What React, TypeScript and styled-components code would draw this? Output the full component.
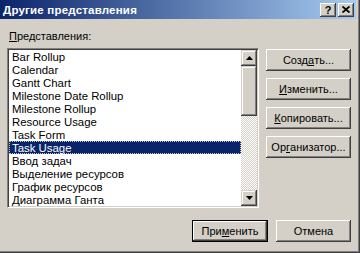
import React from 'react';
import styled, { createGlobalStyle } from 'styled-components';

const GlobalStyle = createGlobalStyle`
  html, body {
    margin: 0;
    padding: 0;
    background: #d4d0c8;
  }
  body {
    font-family: 'Liberation Sans', Arial, sans-serif;
    font-size: 11px;
  }
`;

const Window = styled.div`
  width: 360px;
  height: 253px;
  box-sizing: border-box;
  padding: 0 3px 3px 0;
  display: flex;
  flex-direction: column;
  background: #d4d0c8;
  box-shadow: inset -1px -1px #404040, inset -2px -2px #808080;
  overflow: hidden;
`;

const TitleBar = styled.div`
  height: 19px;
  margin-right: 1px;
  display: flex;
  align-items: center;
  padding: 0 2px 0 3px;
  background: linear-gradient(to right, #0a246a, #a6caf0);
  flex-shrink: 0;
`;

const TitleText = styled.div`
  flex: 1;
  color: #fff;
  font-weight: 700;
  font-size: 11.5px;
  letter-spacing: 0.2px;
  white-space: nowrap;
`;

const CaptionButton = styled.div<{ $gap?: number }>`
  width: 16px;
  height: 14px;
  box-sizing: border-box;
  margin-left: ${(p) => p.$gap ?? 0}px;
  display: flex;
  align-items: center;
  justify-content: center;
  background: #d4d0c8;
  box-shadow: inset -1px -1px #404040, inset 1px 1px #fff, inset -2px -2px #808080;
  font-weight: 700;
  font-size: 11px;
  color: #000;
  line-height: 14px;
`;

const Body = styled.div`
  flex: 1;
  display: flex;
  flex-direction: column;
  padding: 11px 6px 0 7px;
`;

const Label = styled.div`
  height: 13px;
  line-height: 13px;
  padding-left: 2px;
  margin-bottom: 5px;
  color: #000;
`;

const Key = styled.span`
  text-decoration: underline;
  text-underline-offset: 1px;
`;

const TopRow = styled.div`
  display: flex;
  align-items: flex-start;
  gap: 7px;
`;

const ListBox = styled.div`
  width: 252px;
  height: 160px;
  box-sizing: border-box;
  padding: 1px;
  display: flex;
  background: #fff;
  border: 1px solid;
  border-color: #808080 #fff #fff #808080;
  box-shadow: inset 1px 1px #404040, inset -1px -1px #d4d0c8;
`;

const Rows = styled.div`
  flex: 1;
  display: flex;
  flex-direction: column;
`;

const Row = styled.div<{ $selected?: boolean }>`
  height: 13px;
  line-height: 12px;
  box-sizing: border-box;
  padding-left: 2px;
  font-size: 11.4px;
  white-space: nowrap;
  color: ${(p) => (p.$selected ? '#fff' : '#000')};
  background: ${(p) => (p.$selected ? '#0a246a' : 'transparent')};
  border: 1px dotted ${(p) => (p.$selected ? '#c8c8a0' : 'transparent')};
`;

const ScrollBar = styled.div`
  width: 16px;
  display: flex;
  flex-direction: column;
  background-color: #d4d0c8;
  background-image: repeating-conic-gradient(#fff 0 25%, #d4d0c8 0 50%);
  background-size: 2px 2px;
`;

const ScrollPart = styled.div<{ $h: number }>`
  height: ${(p) => p.$h}px;
  flex-shrink: 0;
  box-sizing: border-box;
  display: flex;
  align-items: center;
  justify-content: center;
  background: #d4d0c8;
  box-shadow: inset -1px -1px #404040, inset 1px 1px #d4d0c8, inset -2px -2px #808080, inset 2px 2px #fff;
`;

const Track = styled.div`
  flex: 1;
`;

const ButtonColumn = styled.div`
  display: flex;
  flex-direction: column;
  gap: 7px;
  margin-top: 1px;
`;

const Button = styled.div<{ $w: number; $default?: boolean }>`
  width: ${(p) => p.$w}px;
  height: 22px;
  box-sizing: border-box;
  display: flex;
  align-items: center;
  justify-content: center;
  background: #d4d0c8;
  color: #000;
  white-space: nowrap;
  border: ${(p) => (p.$default ? '1px solid #000' : 'none')};
  box-shadow: inset -1px -1px #404040, inset 1px 1px #fff, inset -2px -2px #808080, inset 2px 2px #d4d0c8;
`;

const Footer = styled.div`
  display: flex;
  justify-content: flex-end;
  gap: 8px;
  margin-top: 12px;
`;

const Arrow = ({ down }: { down?: boolean }) => (
  <svg width="7" height="4" viewBox="0 0 7 4">
    <path d={down ? 'M0 0h7L3.5 4z' : 'M3.5 0L7 4H0z'} fill="#000" />
  </svg>
);

const views = [
  'Bar Rollup',
  'Calendar',
  'Gantt Chart',
  'Milestone Date Rollup',
  'Milestone Rollup',
  'Resource Usage',
  'Task Form',
  'Task Usage',
  'Ввод задач',
  'Выделение ресурсов',
  'График ресурсов',
  'Диаграмма Ганта',
];

export default function App() {
  const selected = 'Task Usage';

  return (
    <>
      <GlobalStyle />
      <Window>
        <TitleBar>
          <TitleText>Другие представления</TitleText>
          <CaptionButton>?</CaptionButton>
          <CaptionButton $gap={2}>
            <svg width="8" height="7" viewBox="0 0 8 7">
              <path d="M0.5 0.5L7.5 6.5M7.5 0.5L0.5 6.5" stroke="#000" strokeWidth="1.8" />
            </svg>
          </CaptionButton>
        </TitleBar>
        <Body>
          <Label>
            <Key>П</Key>редставления:
          </Label>
          <TopRow>
            <ListBox>
              <Rows>
                {views.map((v) => (
                  <Row key={v} $selected={v === selected}>
                    {v}
                  </Row>
                ))}
              </Rows>
              <ScrollBar>
                <ScrollPart $h={16}>
                  <Arrow />
                </ScrollPart>
                <ScrollPart $h={50} />
                <Track />
                <ScrollPart $h={16}>
                  <Arrow down />
                </ScrollPart>
              </ScrollBar>
            </ListBox>
            <ButtonColumn>
              <Button $w={85}>
                Созд<Key>а</Key>ть...
              </Button>
              <Button $w={85}>
                <Key>И</Key>зменить...
              </Button>
              <Button $w={85}>
                <Key>К</Key>опировать...
              </Button>
              <Button $w={85}>
                Ор<Key>г</Key>анизатор...
              </Button>
            </ButtonColumn>
          </TopRow>
          <Footer>
            <Button $w={76} $default>
              При<Key>м</Key>енить
            </Button>
            <Button $w={75}>Отмена</Button>
          </Footer>
        </Body>
      </Window>
    </>
  );
}
